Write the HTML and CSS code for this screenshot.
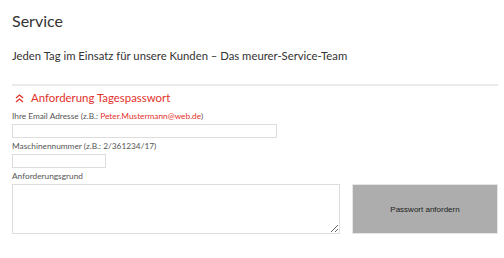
FILE: index.html
```html
<!DOCTYPE html>
<html lang="de">
<head>
  <meta charset="UTF-8">
  <title>Service</title>
  <link rel="stylesheet" href="styles.css">
</head>
<body>
  <div class="page">
    <h1>Service</h1>
    <p class="intro">Jeden Tag im Einsatz für unsere Kunden – Das meurer-Service-Team</p>

    <section class="panel">
      <h2>
        <svg class="chev" width="9" height="9" viewBox="0 0 9 9">
          <path d="M1 4 L4.5 1 L8 4 M1 8 L4.5 5 L8 8" fill="none" stroke="#e3312b" stroke-width="1.3"/>
        </svg>
        Anforderung Tagespasswort
      </h2>

      <label class="lbl first" for="email">Ihre Email Adresse (z.B.: <span class="hint">Peter.Mustermann@web.de</span>)</label>
      <input id="email" class="field email" type="text">

      <label class="lbl" for="nr">Maschinennummer (z.B.: 2/361234/17)</label>
      <input id="nr" class="field nr" type="text">

      <label class="lbl" for="grund">Anforderungsgrund</label>
      <div class="row">
        <textarea id="grund" class="field grund"></textarea>
        <button class="send">Passwort anfordern</button>
      </div>
    </section>
  </div>
</body>
</html>
```

FILE: styles.css
```css
body {
  margin: 0;
  background: #fff;
  font-family: Lato, "Open Sans", sans-serif;
  color: #333;
}

.page {
  padding: 11px 6px 0 12px;
}

h1 {
  margin: 0;
  font-size: 16px;
  line-height: 20px;
  font-weight: 400;
  color: #333;
}

.intro {
  margin: 18px 0 0;
  font-size: 11.3px;
  line-height: 14px;
  font-weight: 400;
  color: #333;
}

.panel {
  margin-top: 21px;
  border-top: 2px solid #ebebeb;
}

h2 {
  margin: 4px 0 0;
  font-size: 11.4px;
  line-height: 16px;
  font-weight: 400;
  color: #e3312b;
  display: flex;
  align-items: center;
}

.chev {
  margin: 0 7px 0 3px;
}

.lbl {
  display: block;
  margin-top: 2px;
  font-size: 8.3px;
  line-height: 12px;
  color: #555;
}

.lbl.first {
  margin-top: 4px;
}

.hint {
  color: #e3312b;
}

.field {
  display: block;
  box-sizing: border-box;
  margin: 2px 0 0;
  padding: 2px 4px;
  border: 1px solid #ddd;
  background: #fff;
  font: inherit;
}

.email {
  width: 265px;
  height: 14px;
}

.nr {
  width: 94px;
  height: 14px;
}

.row {
  display: flex;
  gap: 12px;
  margin-top: 2px;
}

.grund {
  margin: 0;
  width: 328px;
  height: 50px;
  resize: vertical;
}

.send {
  width: 146px;
  height: 50px;
  border: 1px solid #e6e6e6;
  background: #adadad;
  color: #222;
  font-family: "Liberation Sans", Arial, sans-serif;
  font-size: 8px;
  cursor: pointer;
}
```
